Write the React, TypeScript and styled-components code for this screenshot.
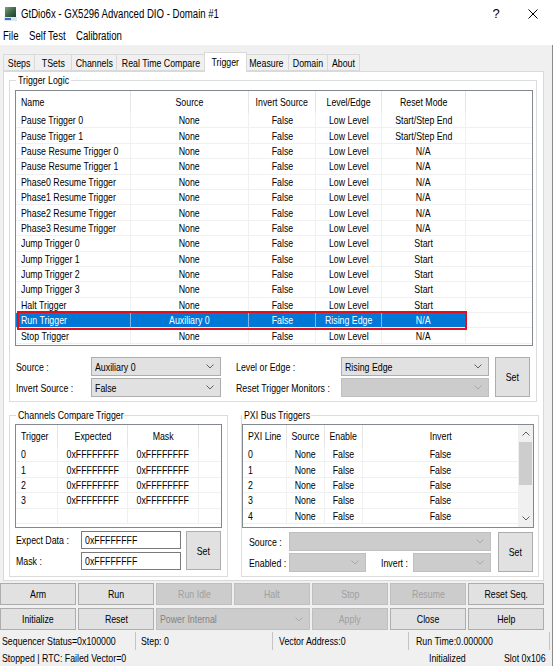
import React from 'react'
import styled, { createGlobalStyle } from 'styled-components'

const FONT = `'Liberation Sans', Arial, sans-serif`
const ROW_H = 15.4

const GlobalStyle = createGlobalStyle`
  html, body {
    margin: 0;
    padding: 0;
    background: #fff;
  }
  body {
    font-family: ${FONT};
    font-size: 11px;
    color: #000;
  }
  * {
    box-sizing: border-box;
  }
`

// the dialog font is narrower than any installed face, so text is squeezed horizontally
const Txt = styled.span<{ $c?: boolean }>`
  display: inline-block;
  white-space: nowrap;
  transform: scaleX(0.8);
  transform-origin: ${(p) => (p.$c ? 'center' : 'left')} center;
`

const Window = styled.div`
  width: 554px;
  height: 666px;
  display: flex;
  flex-direction: column;
  background: #fff;
  overflow: hidden;
`

const TitleBar = styled.div`
  height: 27px;
  flex-shrink: 0;
  display: flex;
  align-items: center;
  padding: 0 2px 0 4px;
  font-size: 12px;
`

const TitleText = styled.div`
  flex: 1;
  margin-left: 4px;
  white-space: nowrap;
`

const TitleButton = styled.div<{ $w: number }>`
  width: ${(p) => p.$w}px;
  height: 27px;
  display: flex;
  align-items: center;
  justify-content: center;
  font-size: 13px;
`

const MenuBar = styled.div`
  height: 18px;
  flex-shrink: 0;
  display: flex;
  align-items: center;
  padding-left: 3px;
  font-size: 12px;
`

const MenuItem = styled.div<{ $w: number }>`
  width: ${(p) => p.$w}px;
`

const Body = styled.div`
  flex: 1;
  display: flex;
  flex-direction: column;
  background: #f0f0f0;
  margin-right: 1px;
  border-right: 1px solid #8a8a8a;
`

const TabStrip = styled.div`
  height: 26px;
  flex-shrink: 0;
  display: flex;
  align-items: flex-end;
  padding-left: 3px;
`

const Tab = styled.div<{ $w: number; $active?: boolean; $first?: boolean }>`
  position: relative;
  width: ${(p) => p.$w + (p.$active ? 4 : 0)}px;
  height: ${(p) => (p.$active ? 20 : 17)}px;
  margin: ${(p) => (p.$active ? '0 -2px -1px -2px' : '0')};
  z-index: ${(p) => (p.$active ? 1 : 0)};
  display: flex;
  align-items: center;
  justify-content: center;
  padding-bottom: ${(p) => (p.$active ? 2 : 0)}px;
  background: ${(p) => (p.$active ? '#fff' : '#f0f0f0')};
  border: 1px solid #d9d9d9;
  border-bottom: ${(p) => (p.$active ? 'none' : '1px solid #d9d9d9')};
  border-left: ${(p) => (p.$first || p.$active ? '1px solid #d9d9d9' : 'none')};
`

const TabPage = styled.div`
  margin-left: 3px;
  width: 541px;
  height: 510px;
  flex-shrink: 0;
  background: #fff;
  border: 1px solid #d9d9d9;
  display: flex;
  flex-direction: column;
  padding-left: 5px;
`

const Group = styled.fieldset<{ $w: number; $top: number; $pl: number; $pt: number }>`
  width: ${(p) => p.$w}px;
  margin: ${(p) => p.$top}px 0 0 0;
  padding: ${(p) => p.$pt}px 0 4px ${(p) => p.$pl}px;
  border: 1px solid #dcdcdc;
  min-width: 0;
`

const Caption = styled.legend<{ $ml: number; $w: number }>`
  width: ${(p) => p.$w}px;
  margin-left: ${(p) => p.$ml}px;
  padding: 0 2px;
  line-height: 13px;
  font-size: 11px;
  white-space: nowrap;
`

const LowerRow = styled.div`
  display: flex;
  gap: 13px;
`

/* ---------- list view ---------- */

const ListBox = styled.div<{ $h: number; $w: number }>`
  position: relative;
  width: ${(p) => p.$w}px;
  height: ${(p) => p.$h}px;
  border: 1px solid #828790;
  background: #fff;
  display: flex;
  overflow: hidden;
`

const ListMain = styled.div`
  flex: 1;
  min-width: 0;
  display: flex;
  flex-direction: column;
`

const HeaderRow = styled.div<{ $cols: string }>`
  display: grid;
  grid-template-columns: ${(p) => p.$cols};
  height: 22px;
  flex-shrink: 0;
`

type Align = 'left' | 'center'

const HeaderCell = styled.div<{ $align: Align; $last?: boolean }>`
  display: flex;
  align-items: center;
  justify-content: ${(p) => (p.$align === 'left' ? 'flex-start' : 'center')};
  padding-left: ${(p) => (p.$align === 'left' ? 5 : 0)}px;
  border-right: ${(p) => (p.$last ? 'none' : '1px solid #e5e5e5')};
  overflow: hidden;
`

const Row = styled.div<{ $cols: string }>`
  display: grid;
  grid-template-columns: ${(p) => p.$cols};
  height: ${ROW_H}px;
  flex-shrink: 0;
`

const Cell = styled.div<{ $align: Align; $sel?: boolean; $last?: boolean }>`
  display: flex;
  align-items: center;
  justify-content: ${(p) => (p.$align === 'left' ? 'flex-start' : 'center')};
  padding-left: ${(p) => (p.$align === 'left' ? 5 : 0)}px;
  border-right: ${(p) => (p.$last ? 'none' : p.$sel ? '1px solid #7fb6e8' : '1px solid #f0f0f0')};
  border-bottom: 1px solid #f0f0f0;
  background: ${(p) => (p.$sel ? '#0078d7' : 'transparent')};
  color: ${(p) => (p.$sel ? '#fff' : '#000')};
  overflow: hidden;
`

const Marker = styled.div<{ $row: number }>`
  position: absolute;
  top: ${(p) => 22 + p.$row * ROW_H - 2}px;
  left: 1px;
  width: 450px;
  height: 19px;
  border: 2px solid #e3101c;
  pointer-events: none;
`

const ScrollBar = styled.div`
  width: 15px;
  flex-shrink: 0;
  display: flex;
  flex-direction: column;
  background: #f0f0f0;
`

const ScrollArrow = styled.div`
  height: 17px;
  display: flex;
  align-items: center;
  justify-content: center;
`

const ScrollTrack = styled.div`
  flex: 1;
  padding: 0 1px;
`

const ScrollThumb = styled.div`
  height: 43px;
  background: #cdcdcd;
`

interface ListProps {
  width: number
  height: number
  template: string
  headers: string[]
  aligns: Align[]
  rows: string[][]
  filler?: boolean
  selected?: number
  blankRows?: number
  scroll?: boolean
  children?: React.ReactNode
}

const ListView = ({
  width,
  height,
  template,
  headers,
  aligns,
  rows,
  filler = false,
  selected = -1,
  blankRows = 0,
  scroll = false,
  children,
}: ListProps) => {
  const body = [...rows, ...Array.from({ length: blankRows }, () => headers.map(() => ''))]
  return (
    <ListBox $w={width} $h={height}>
      <ListMain>
        <HeaderRow $cols={template}>
          {headers.map((h, i) => (
            <HeaderCell key={h} $align={aligns[i]} $last={!filler && i === headers.length - 1}>
              <Txt $c={aligns[i] === 'center'}>{h}</Txt>
            </HeaderCell>
          ))}
          {filler && <HeaderCell $align="left" $last />}
        </HeaderRow>
        {body.map((r, ri) => (
          <Row key={ri} $cols={template}>
            {r.map((v, ci) => (
              <Cell key={ci} $align={aligns[ci]} $sel={ri === selected} $last={!filler && ci === r.length - 1}>
                {v && <Txt $c={aligns[ci] === 'center'}>{v}</Txt>}
              </Cell>
            ))}
            {filler && <Cell $align="left" $last />}
          </Row>
        ))}
      </ListMain>
      {scroll && (
        <ScrollBar>
          <ScrollArrow>
            <svg width="8" height="5" viewBox="0 0 8 5">
              <polyline points="0.5,4.5 4,1 7.5,4.5" fill="none" stroke="#606060" />
            </svg>
          </ScrollArrow>
          <ScrollTrack>
            <ScrollThumb />
          </ScrollTrack>
          <ScrollArrow>
            <svg width="8" height="5" viewBox="0 0 8 5">
              <polyline points="0.5,0.5 4,4 7.5,0.5" fill="none" stroke="#606060" />
            </svg>
          </ScrollArrow>
        </ScrollBar>
      )}
      {children}
    </ListBox>
  )
}

/* ---------- form controls ---------- */

const ComboBox = styled.div<{ $disabled?: boolean }>`
  height: 100%;
  display: flex;
  align-items: center;
  padding: 0 6px 0 3px;
  background: ${(p) => (p.$disabled ? '#cccccc' : '#e1e1e1')};
  border: 1px solid ${(p) => (p.$disabled ? '#bfbfbf' : '#adadad')};
  color: ${(p) => (p.$disabled ? '#838383' : '#000')};
`

const ComboValue = styled.div`
  flex: 1;
  min-width: 0;
  overflow: hidden;
`

const Combo = ({ value = '', disabled = false }: { value?: string; disabled?: boolean }) => (
  <ComboBox $disabled={disabled}>
    <ComboValue>{value && <Txt>{value}</Txt>}</ComboValue>
    <svg width="8" height="5" viewBox="0 0 8 5">
      <polyline points="0.5,0.5 4,4 7.5,0.5" fill="none" stroke={disabled ? '#a8a8a8' : '#606060'} />
    </svg>
  </ComboBox>
)

const Button = styled.button<{ $disabled?: boolean }>`
  font: inherit;
  margin: 0;
  padding: 0;
  width: 100%;
  height: 100%;
  display: flex;
  align-items: center;
  justify-content: center;
  background: ${(p) => (p.$disabled ? '#cccccc' : '#e1e1e1')};
  border: 1px solid ${(p) => (p.$disabled ? '#bfbfbf' : '#adadad')};
  color: ${(p) => (p.$disabled ? '#a0a0a0' : '#000')};
`

const TextBox = styled.div`
  display: flex;
  align-items: center;
  padding-left: 3px;
  background: #fff;
  border: 1px solid #7a7a7a;
`

const Label = styled.div<{ $pl?: number }>`
  display: flex;
  align-items: center;
  padding-left: ${(p) => p.$pl ?? 0}px;
`

const TriggerForm = styled.div`
  margin: 11px 0 0 1px;
  display: grid;
  grid-template-columns: 75px 130px 120px 148px 41px;
  grid-template-rows: 19px 19px;
  row-gap: 2px;
`

const SetCell = styled.div<{ $ml: number }>`
  grid-row: 1 / span 2;
  grid-column: -2;
  padding-left: ${(p) => p.$ml}px;
`

const CompareForm = styled.div`
  margin: 3px 0 0 1px;
  display: grid;
  grid-template-columns: 65px 100px 40px;
  grid-template-rows: 18px 18px;
  row-gap: 3px;
`

const PxiForm = styled.div`
  margin: 4px 0 0 7px;
  display: grid;
  grid-template-columns: 40px 77px 47px 78px 42px;
  grid-template-rows: 19px 19px;
  row-gap: 2px;
`

const Span = styled.div<{ $span: number }>`
  grid-column: span ${(p) => p.$span};
`

/* ---------- bottom ---------- */

const ButtonGrid = styled.div`
  margin-top: 2px;
  display: grid;
  grid-template-columns: repeat(7, 76px);
  grid-template-rows: 22px 22px;
  column-gap: 2px;
  row-gap: 3px;
`

const StatusRow = styled.div<{ $h: number; $mt?: number }>`
  height: ${(p) => p.$h}px;
  margin-top: ${(p) => p.$mt ?? 0}px;
  display: flex;
  width: 550px;
`

const StatusCell = styled.div<{ $w?: number; $pl: number; $sep?: boolean }>`
  ${(p) => (p.$w ? `width: ${p.$w}px;` : 'flex: 1;')}
  display: flex;
  align-items: center;
  padding-left: ${(p) => p.$pl}px;
  border-right: ${(p) => (p.$sep ? '1px solid #c4c4c4' : 'none')};
  overflow: hidden;
`

/* ---------- data ---------- */

const tabs: [string, number][] = [
  ['Steps', 32],
  ['TSets', 37],
  ['Channels', 45],
  ['Real Time Compare', 89],
  ['Trigger', 39],
  ['Measure', 44],
  ['Domain', 39],
  ['About', 32],
]

const triggerRows: string[][] = [
  ['Pause Trigger 0', 'None', 'False', 'Low Level', 'Start/Step End'],
  ['Pause Trigger 1', 'None', 'False', 'Low Level', 'Start/Step End'],
  ['Pause Resume Trigger 0', 'None', 'False', 'Low Level', 'N/A'],
  ['Pause Resume Trigger 1', 'None', 'False', 'Low Level', 'N/A'],
  ['Phase0 Resume Trigger', 'None', 'False', 'Low Level', 'N/A'],
  ['Phase1 Resume Trigger', 'None', 'False', 'Low Level', 'N/A'],
  ['Phase2 Resume Trigger', 'None', 'False', 'Low Level', 'N/A'],
  ['Phase3 Resume Trigger', 'None', 'False', 'Low Level', 'N/A'],
  ['Jump Trigger 0', 'None', 'False', 'Low Level', 'Start'],
  ['Jump Trigger 1', 'None', 'False', 'Low Level', 'Start'],
  ['Jump Trigger 2', 'None', 'False', 'Low Level', 'Start'],
  ['Jump Trigger 3', 'None', 'False', 'Low Level', 'Start'],
  ['Halt Trigger', 'None', 'False', 'Low Level', 'Start'],
  ['Run Trigger', 'Auxiliary 0', 'False', 'Rising Edge', 'N/A'],
  ['Stop Trigger', 'None', 'False', 'Low Level', 'N/A'],
]
const SELECTED = 13

const compareRows = [0, 1, 2, 3].map((i) => [String(i), '0xFFFFFFFF', '0xFFFFFFFF'])
const pxiRows = [0, 1, 2, 3, 4].map((i) => [String(i), 'None', 'False', 'False'])

const AppIcon = () => (
  <svg width="13" height="14" viewBox="0 0 13 14">
    <defs>
      <linearGradient id="appicon" x1="0" y1="0" x2="1" y2="1">
        <stop offset="0" stopColor="#7da27a" />
        <stop offset="0.5" stopColor="#3f6b4a" />
        <stop offset="1" stopColor="#1f3a28" />
      </linearGradient>
    </defs>
    <rect x="1" y="0" width="11" height="10" fill="url(#appicon)" />
    <rect x="0" y="10" width="13" height="4" fill="#dce4ec" />
    <rect x="1" y="11" width="6" height="2" fill="#3a6cc4" />
  </svg>
)

export default function App() {
  return (
    <>
      <GlobalStyle />
      <Window>
        <TitleBar>
          <AppIcon />
          <TitleText>
            <Txt>GtDio6x - GX5296 Advanced DIO - Domain #1</Txt>
          </TitleText>
          <TitleButton $w={36}>?</TitleButton>
          <TitleButton $w={38}>
            <svg width="10" height="10" viewBox="0 0 10 10">
              <path d="M0.5 0.5 L9.5 9.5 M9.5 0.5 L0.5 9.5" stroke="#000" strokeWidth="1" />
            </svg>
          </TitleButton>
        </TitleBar>
        <MenuBar>
          <MenuItem $w={26}>
            <Txt>File</Txt>
          </MenuItem>
          <MenuItem $w={47}>
            <Txt>Self Test</Txt>
          </MenuItem>
          <MenuItem $w={60}>
            <Txt>Calibration</Txt>
          </MenuItem>
        </MenuBar>
        <Body>
          <TabStrip>
            {tabs.map(([name, w], i) => (
              <Tab key={name} $w={w} $active={name === 'Trigger'} $first={i === 0}>
                <Txt $c>{name}</Txt>
              </Tab>
            ))}
          </TabStrip>
          <TabPage>
            <Group $w={528} $top={1.5} $pl={5} $pt={3.5}>
              <Caption $ml={1} $w={55}>
                <Txt>Trigger Logic</Txt>
              </Caption>
              <ListView
                width={518}
                height={256}
                template="115px 118px 67px 66px 84px 1fr"
                headers={['Name', 'Source', 'Invert Source', 'Level/Edge', 'Reset Mode']}
                aligns={['left', 'center', 'center', 'center', 'center']}
                rows={triggerRows}
                filler
                selected={SELECTED}
              >
                <Marker $row={SELECTED} />
              </ListView>
              <TriggerForm>
                <Label>
                  <Txt>Source :</Txt>
                </Label>
                <Combo value="Auxiliary 0" />
                <Label $pl={15}>
                  <Txt>Level or Edge :</Txt>
                </Label>
                <Combo value="Rising Edge" />
                <SetCell $ml={6}>
                  <Button>
                    <Txt $c>Set</Txt>
                  </Button>
                </SetCell>
                <Label>
                  <Txt>Invert Source :</Txt>
                </Label>
                <Combo value="False" />
                <Label $pl={15}>
                  <Txt>Reset Trigger Monitors :</Txt>
                </Label>
                <Combo disabled />
              </TriggerForm>
            </Group>
            <LowerRow>
              <Group $w={219} $top={6.5} $pl={5} $pt={2.5}>
                <Caption $ml={1} $w={108}>
                  <Txt>Channels Compare Trigger</Txt>
                </Caption>
                <ListView
                  width={207}
                  height={104}
                  template="42px 70px 71px 1fr"
                  headers={['Trigger', 'Expected', 'Mask']}
                  aligns={['left', 'center', 'center']}
                  rows={compareRows}
                  filler
                  blankRows={1}
                />
                <CompareForm>
                  <Label>
                    <Txt>Expect Data :</Txt>
                  </Label>
                  <TextBox>
                    <Txt>0xFFFFFFFF</Txt>
                  </TextBox>
                  <SetCell $ml={5}>
                    <Button>
                      <Txt $c>Set</Txt>
                    </Button>
                  </SetCell>
                  <Label>
                    <Txt>Mask :</Txt>
                  </Label>
                  <TextBox>
                    <Txt>0xFFFFFFFF</Txt>
                  </TextBox>
                </CompareForm>
              </Group>
              <Group $w={298} $top={6.5} $pl={0} $pt={2.5}>
                <Caption $ml={0} $w={69}>
                  <Txt>PXI Bus Triggers</Txt>
                </Caption>
                <ListView
                  width={292}
                  height={104}
                  template="44px 38px 38px 1fr"
                  headers={['PXI Line', 'Source', 'Enable', 'Invert']}
                  aligns={['left', 'center', 'center', 'center']}
                  rows={pxiRows}
                  scroll
                />
                <PxiForm>
                  <Label>
                    <Txt>Source :</Txt>
                  </Label>
                  <Span $span={3}>
                    <Combo disabled />
                  </Span>
                  <SetCell $ml={7}>
                    <Button>
                      <Txt $c>Set</Txt>
                    </Button>
                  </SetCell>
                  <Label>
                    <Txt>Enabled :</Txt>
                  </Label>
                  <Combo disabled />
                  <Label $pl={15}>
                    <Txt>Invert :</Txt>
                  </Label>
                  <Combo disabled />
                </PxiForm>
              </Group>
            </LowerRow>
          </TabPage>
          <ButtonGrid>
            {['Arm', 'Run', 'Run Idle', 'Halt', 'Stop', 'Resume', 'Reset Seq.'].map((b, i) => (
              <Button key={b} $disabled={i >= 2 && i <= 5}>
                <Txt $c>{b}</Txt>
              </Button>
            ))}
            <Button>
              <Txt $c>Initialize</Txt>
            </Button>
            <Button>
              <Txt $c>Reset</Txt>
            </Button>
            <Span $span={2}>
              <Combo value="Power Internal" disabled />
            </Span>
            <Button $disabled>
              <Txt $c>Apply</Txt>
            </Button>
            <Button>
              <Txt $c>Close</Txt>
            </Button>
            <Button>
              <Txt $c>Help</Txt>
            </Button>
          </ButtonGrid>
          <StatusRow $h={18} $mt={2}>
            <StatusCell $w={136} $pl={2} $sep>
              <Txt>Sequencer Status=0x100000</Txt>
            </StatusCell>
            <StatusCell $w={137} $pl={5} $sep>
              <Txt>Step: 0</Txt>
            </StatusCell>
            <StatusCell $w={136} $pl={6} $sep>
              <Txt>Vector Address:0</Txt>
            </StatusCell>
            <StatusCell $pl={7} $sep>
              <Txt>Run Time:0.000000</Txt>
            </StatusCell>
          </StatusRow>
          <StatusRow $h={16}>
            <StatusCell $pl={2}>
              <Txt>Stopped | RTC: Failed Vector=0</Txt>
            </StatusCell>
            <StatusCell $w={80} $pl={10}>
              <Txt>Initialized</Txt>
            </StatusCell>
            <StatusCell $w={51} $pl={5}>
              <Txt>Slot 0x106</Txt>
            </StatusCell>
          </StatusRow>
        </Body>
      </Window>
    </>
  )
}
